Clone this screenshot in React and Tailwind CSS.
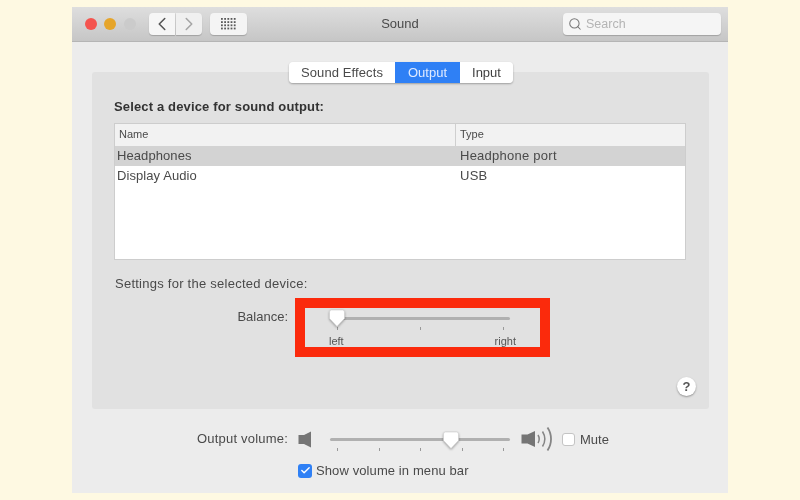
import { ChevronLeft, ChevronRight, Search, Check } from 'lucide-react';

const DEVICES = [
  { name: 'Headphones', type: 'Headphone port', selected: true },
  { name: 'Display Audio', type: 'USB', selected: false },
];

function GridDots() {
  const dots = [];
  for (let r = 0; r < 4; r++) {
    for (let c = 0; c < 5; c++) {
      dots.push(<rect key={`${r}-${c}`} x={c * 3.2} y={r * 3.2} width="1.8" height="1.8" fill="#5a5a5a" />);
    }
  }
  return <svg width="15" height="12" viewBox="0 0 15 12">{dots}</svg>;
}

function Thumb() {
  return (
    <svg width="18" height="19" viewBox="0 0 18 19" className="drop-shadow-[0_1px_1px_rgba(0,0,0,0.35)]">
      <path d="M3.5 1h11a2 2 0 0 1 2 2v6.5L9 17.5 1.5 9.5V3a2 2 0 0 1 2-2z" fill="#fff" stroke="#cfcfcf" strokeWidth="0.6" />
    </svg>
  );
}

function Ticks({ count, className }) {
  return (
    <div className={`flex justify-between ${className}`}>
      {Array.from({ length: count }).map((_, i) => (
        <span key={i} className="w-px h-[3px] bg-[#999]" />
      ))}
    </div>
  );
}

function SpeakerLow() {
  return (
    <svg width="14" height="17" viewBox="0 0 14 17">
      <path d="M0.500 4h5.500l7-3.500v16L6 13H0.500z" fill="#757575" />
    </svg>
  );
}

function SpeakerHigh() {
  return (
    <svg width="32" height="26" viewBox="0 0 32 26" fill="none">
      <path d="M0.500 8.500h6l7.500-3.500v16l-7.500-3.500h-6z" fill="#757575" />
      <path d="M17 9c1.500 2.500 1.500 5.500 0 8" stroke="#858585" strokeWidth="1.500" />
      <path d="M21.500 5.500c2.800 4.500 2.800 10.500 0 15" stroke="#858585" strokeWidth="1.500" />
      <path d="M26.500 1.500c4.700 7 4.700 16 0 23" stroke="#858585" strokeWidth="1.800" />
    </svg>
  );
}

export default function App() {
  return (
    <div className="w-[800px] h-[500px] bg-[#fef9e2] pt-[7px] pl-[72px] overflow-hidden font-['Liberation_Sans',sans-serif] text-[#3f3f3f]">
      <div className="w-[656px] h-[486px] flex flex-col bg-[#ececec] blur-[0.6px]">
        {/* title bar */}
        <div className="h-[35px] shrink-0 flex items-center bg-gradient-to-b from-[#dedede] to-[#c6c6c6] border-b border-[#b5b5b5]">
          <span className="ml-[13px] w-[12px] h-[12px] rounded-full bg-[#f4544f]" />
          <span className="ml-[7px] w-[12px] h-[12px] rounded-full bg-[#e6a52a]" />
          <span className="ml-[8px] w-[12px] h-[12px] rounded-full bg-[#cbcbcb]" />
          <div className="ml-[13px] flex gap-[1px]">
            <div className="w-[26px] h-[22px] bg-[#f6f6f6] rounded-l-[4px] flex items-center justify-center shadow-[0_1px_1px_rgba(0,0,0,0.2)]">
              <ChevronLeft size={22} strokeWidth={1.7} className="text-[#555]" />
            </div>
            <div className="w-[26px] h-[22px] bg-[#f0f0f0] rounded-r-[4px] flex items-center justify-center shadow-[0_1px_1px_rgba(0,0,0,0.2)]">
              <ChevronRight size={22} strokeWidth={1.7} className="text-[#a5a5a5]" />
            </div>
          </div>
          <div className="ml-[8px] w-[37px] h-[22px] bg-[#f4f4f4] rounded-[4px] flex items-center justify-center shadow-[0_1px_1px_rgba(0,0,0,0.2)]">
            <GridDots />
          </div>
          <span className="ml-[123px] w-[60px] text-center text-[13px] text-[#4a4a4a]">Sound</span>
          <div className="ml-[133px] w-[158px] h-[22px] bg-[#f5f5f5] rounded-[4px] flex items-center pl-[5px] gap-[4px] shadow-[0_1px_1px_rgba(0,0,0,0.2)]">
            <Search size={14} strokeWidth={1.8} className="text-[#777]" />
            <span className="text-[12.500px] text-[#b4b4b4]">Search</span>
          </div>
        </div>

        {/* content */}
        <div className="flex-1 px-[20px] flex flex-col">
          <div className="mt-[30px] w-[617px] h-[337px] bg-[#e1e1e1] rounded-[3px] px-[22px] flex flex-col relative">
            {/* tabs */}
            <div className="absolute left-[197px] top-[-10px] flex h-[21px] rounded-[4px] overflow-hidden shadow-[0_1px_2px_rgba(0,0,0,0.3)] text-[13px]">
              <div className="w-[106px] bg-white flex items-center justify-center text-[#4a4a4a] tracking-[0.1px]">Sound Effects</div>
              <div className="w-[65px] bg-[#2f80f5] flex items-center justify-center text-[#dfeaff]">Output</div>
              <div className="w-[53px] bg-white flex items-center justify-center text-[#3f3f3f]">Input</div>
            </div>

            <div className="mt-[26px] h-[17px] leading-[17px] text-[13px] font-bold text-[#333] tracking-[0.15px]">Select a device for sound output:</div>

            {/* device table */}
            <div className="mt-[8px] h-[137px] w-[572px] bg-white border border-[#cdcdcd]">
              <div className="h-[22px] flex items-center bg-[#f2f2f2] text-[11px] text-[#4a4a4a]">
                <div className="w-[341px] pl-[4px] pb-[2px] border-r border-[#cfcfcf] h-full flex items-center">Name</div>
                <div className="pl-[4px] pb-[2px]">Type</div>
              </div>
              {DEVICES.map((d) => (
                <div key={d.name} className={`h-[19.500px] flex items-center text-[13px] text-[#4a4a4a] ${d.selected ? 'bg-[#d3d3d3]' : ''}`}>
                  <div className="w-[342px] pl-[2px] tracking-[0.08px]">{d.name}</div>
                  <div className="pl-[3px] tracking-[0.25px]">{d.type}</div>
                </div>
              ))}
            </div>

            <div className="mt-[15px] h-[17px] pl-[1px] leading-[17px] text-[13px] text-[#4a4a4a] tracking-[0.25px]">Settings for the selected device:</div>

            {/* balance */}
            <div className="mt-[6px] flex">
              <div className="w-[174px] pt-[9px] text-right text-[13px] text-[#4a4a4a]">Balance:</div>
              <div className="ml-[7px] w-[255px] h-[59px] border-[10px] border-[#fb2a0c] box-border">
                <div className="ml-[23px] w-[188px] relative pt-[9px]">
                  <div className="ml-[9px] w-[173px] h-[3px] rounded-full bg-[#b0b0b0]" />
                  <div className="absolute left-0 top-[1px]"><Thumb /></div>
                  <Ticks count={3} className="ml-[9px] w-[167px] mt-[7px]" />
                  <div className="flex justify-between w-[188px] pl-[1px] text-[11px] leading-[12px] mt-[5px] text-[#555]">
                    <span>left</span>
                    <span>right</span>
                  </div>
                </div>
              </div>
            </div>

            <div className="mt-[20px] -mr-[9px] self-end w-[19px] h-[19px] rounded-full bg-white shadow-[0_1px_2px_rgba(0,0,0,0.35)] flex items-center justify-center text-[13px] font-bold text-[#555]">?</div>
          </div>

          {/* output volume */}
          <div className="mt-[19px] h-[22px] flex items-center">
            <div className="w-[196px] text-right text-[13px] text-[#4a4a4a] tracking-[0.2px]">Output volume:</div>
            <div className="ml-[10px]"><SpeakerLow /></div>
            <div className="ml-[18px] w-[180px] relative">
              <div className="h-[3px] rounded-full bg-[#b0b0b0]" />
              <div className="absolute left-[112px] top-[-7px]"><Thumb /></div>
              <Ticks count={5} className="absolute left-[7px] top-[10px] w-[167px]" />
            </div>
            <div className="ml-[11px]"><SpeakerHigh /></div>
            <div className="ml-[9px] w-[13px] h-[13px] rounded-[3px] bg-white border border-[#c4c4c4]" />
            <span className="ml-[5px] pt-[2px] text-[13px] text-[#4a4a4a]">Mute</span>
          </div>

          <div className="mt-[11px] ml-[206px] flex items-center">
            <div className="w-[14px] h-[14px] rounded-[3px] bg-[#2f80f5] flex items-center justify-center">
              <Check size={11} strokeWidth={3} className="text-white" />
            </div>
            <span className="ml-[4px] text-[13px] text-[#4a4a4a] tracking-[0.1px]">Show volume in menu bar</span>
          </div>
        </div>
      </div>
    </div>
  );
}
